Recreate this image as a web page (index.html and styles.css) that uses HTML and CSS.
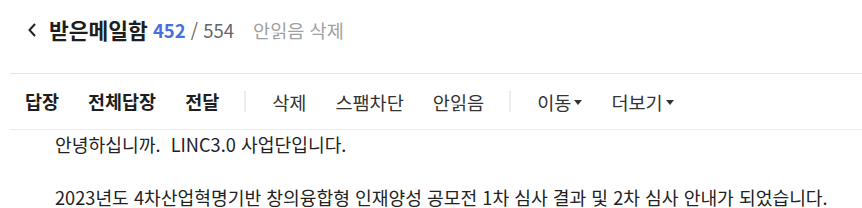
FILE: index.html
```html
<!DOCTYPE html>
<html lang="ko">
<head>
<meta charset="utf-8">
<link rel="stylesheet" href="styles.css">
</head>
<body>
<div class="page">
  <header class="head">
    <svg class="back" width="10" height="16" viewBox="0 0 10 16"><path d="M8 2 L2.5 8 L8 14" fill="none" stroke="#222" stroke-width="2"/></svg>
    <h1 class="title">받은메일함</h1>
    <span class="count"><b class="unread">452</b> / 554</span>
    <span class="del-unread">안읽음 삭제</span>
  </header>
  <nav class="toolbar">
    <span class="btn strong">답장</span>
    <span class="btn strong">전체답장</span>
    <span class="btn strong">전달</span>
    <span class="sep"></span>
    <span class="btn">삭제</span>
    <span class="btn">스팸차단</span>
    <span class="btn">안읽음</span>
    <span class="sep"></span>
    <span class="btn">이동<i class="caret"></i></span>
    <span class="btn">더보기<i class="caret"></i></span>
  </nav>
  <div class="body">
    <p>안녕하십니까.&nbsp; LINC3.0 사업단입니다.</p>
    <p class="blank">&nbsp;</p>
    <p class="last">2023년도 4차산업혁명기반 창의융합형 인재양성 공모전 1차 심사 결과 및 2차 심사 안내가 되었습니다.</p>
  </div>
</div>
</body>
</html>
```
FILE: styles.css
```css
html, body {
  margin: 0;
  padding: 0;
  background: #fff;
}
body {
  font-family: "Noto Sans CJK KR", "Noto Sans", sans-serif;
  color: #222;
  width: 862px;
  height: 208px;
  overflow: hidden;
}
.page {
  padding-left: 10px;
}
.head {
  display: flex;
  align-items: center;
  box-sizing: border-box;
  height: 74px;
  padding: 0 0 14px 17px;
  border-bottom: 1px solid #e4e4e4;
}
.back {
  display: block;
  margin-right: 12px;
  margin-top: 1px;
}
.title {
  margin: 0;
  font-size: 21.5px;
  line-height: 28px;
  font-weight: 700;
  color: #1e1e1e;
}
.count {
  margin-left: 5px;
  font-size: 18.5px;
  line-height: 28px;
  color: #666;
}
.unread {
  color: #4a6fe0;
  font-weight: 700;
}
.del-unread {
  margin-left: 19px;
  font-size: 18.6px;
  line-height: 28px;
  color: #a0a0a0;
}
.toolbar {
  display: flex;
  align-items: center;
  box-sizing: border-box;
  height: 56px;
  padding-left: 15px;
  padding-bottom: 1px;
  border-bottom: 1px solid #ececec;
  gap: 29px;
}
.btn {
  display: flex;
  align-items: center;
  font-size: 18.6px;
  color: #333;
  white-space: nowrap;
}
.btn.strong {
  font-size: 18.5px;
  font-weight: 700;
  color: #1e1e1e;
}
.sep {
  width: 2px;
  height: 21px;
  background: #ededed;
  margin: 0 -3px 0 -4px;
}
.caret {
  display: inline-block;
  width: 0;
  height: 0;
  border-left: 4.5px solid transparent;
  border-right: 4.5px solid transparent;
  border-top: 5px solid #333;
  margin-left: 3px;
  margin-top: 2px;
}
.body {
  padding-left: 45px;
  padding-top: 2px;
  font-size: 18.2px;
  line-height: 24px;
  color: #222;
}
.body p {
  margin: 0;
  white-space: nowrap;
}
.body .blank {
  height: 30px;
}
.body .last {
  line-height: 22px;
}
```
